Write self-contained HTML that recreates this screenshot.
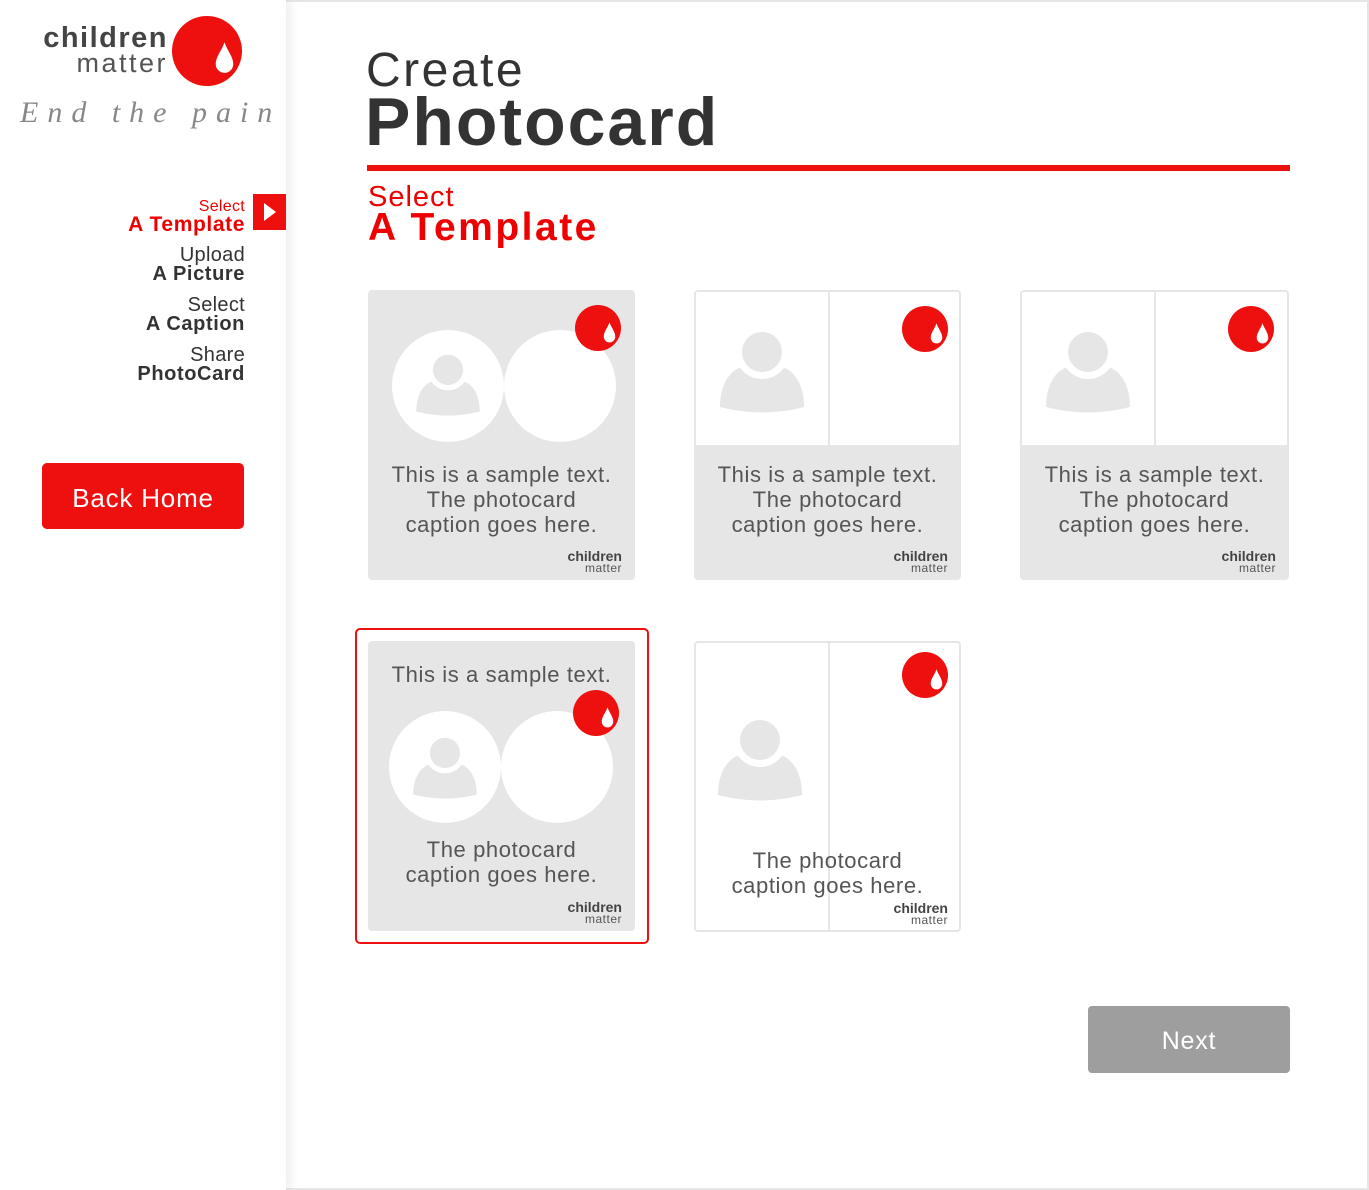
<!DOCTYPE html>
<html><head><meta charset="utf-8"><style>
*{margin:0;padding:0;box-sizing:border-box}
body{width:1369px;height:1190px;background:#fff;font-family:"Liberation Sans",sans-serif;position:relative;overflow:hidden}
.a{position:absolute}
.frame{left:0;top:0;width:1369px;height:1190px;border:2px solid #e6e6e6}
.side{left:0;top:0;width:286px;height:1190px;background:#fff;box-shadow:4px 0 10px rgba(0,0,0,.08)}
.nav{right:1124px;text-align:right;color:#333;line-height:19px}
.nav .l{font-size:20px;letter-spacing:0.3px}
.nav .b{font-size:20px;font-weight:bold;letter-spacing:0.6px}
.card{position:absolute;width:267px;height:290px;border-radius:4px;overflow:hidden}
.cap{position:absolute;left:-10px;width:calc(100% + 20px);text-align:center;font-size:22px;line-height:25px;color:#555;letter-spacing:0.6px}
.lg{position:absolute;right:13px;bottom:6px;text-align:right;color:#444;line-height:11px}
.lg b{font-size:14px;display:block}
.lg span{font-size:12px;color:#555;letter-spacing:0.5px}
</style></head><body>
<div class="a frame"></div>
<div class="a side"></div>

<!-- logo -->
<div class="a" style="left:20px;top:26px;width:148px;text-align:right;color:#444;line-height:25px">
<div style="font-size:29px;font-weight:bold;letter-spacing:1.5px">children</div>
<div style="font-size:27px;color:#555;letter-spacing:2.5px">matter</div></div>
<svg class="a" style="left:172px;top:16px" width="70" height="70" viewBox="0 0 48 48"><circle cx="24" cy="24" r="24" fill="#ee0f0f"/><path d="M36 18 C38 24 42 28 42 33 a6 6 0 0 1 -12 0 c0 -5 4 -9 6 -15z" fill="#fff"/></svg>
<div class="a" style="left:20px;top:96px;font-family:'Liberation Serif',serif;font-style:italic;font-size:30px;color:#888;letter-spacing:9px">End the pain</div>

<!-- nav -->
<div class="a nav" style="top:199px;color:#e00"><div class="l" style="font-size:16px;line-height:16px">Select</div><div class="b" style="font-size:21px">A Template</div></div>
<div class="a" style="left:253px;top:194px;width:33px;height:36px;background:#ee0f0f"></div>
<div class="a" style="left:264px;top:203px;width:0;height:0;border-left:12px solid #fff;border-top:9px solid transparent;border-bottom:9px solid transparent"></div>
<div class="a nav" style="top:246px"><div class="l">Upload</div><div class="b">A Picture</div></div>
<div class="a nav" style="top:296px"><div class="l">Select</div><div class="b">A Caption</div></div>
<div class="a nav" style="top:346px"><div class="l">Share</div><div class="b">PhotoCard</div></div>

<div class="a" style="left:42px;top:463px;width:202px;height:66px;background:#ee0f0f;border-radius:5px;color:#fff;font-size:26px;text-align:center;line-height:70px;letter-spacing:0.8px">Back Home</div>

<!-- header -->
<div class="a" style="left:366px;top:44px;font-size:48px;color:#333;line-height:54px;letter-spacing:2.5px">Create</div>
<div class="a" style="left:365px;top:86px;font-size:68px;font-weight:bold;color:#333;line-height:72px;letter-spacing:2px">Photocard</div>
<div class="a" style="left:367px;top:165px;width:923px;height:6px;background:#ee0f0f"></div>
<div class="a" style="left:368px;top:181px;font-size:29px;color:#e00;line-height:32px;letter-spacing:1px">Select</div>
<div class="a" style="left:368px;top:208px;font-size:39px;font-weight:bold;color:#e00;line-height:40px;letter-spacing:2.5px">A Template</div>

<!-- card1 -->
<div class="card" style="left:368px;top:290px;height:290px;background:#e6e6e6">
<div class="a" style="left:24px;top:40px;width:112px;height:112px;border-radius:50%;background:#fff"></div>
<div class="a" style="left:136px;top:40px;width:112px;height:112px;border-radius:50%;background:#fff"></div>
<div class="cap" style="top:172px">This is a sample text.<br>The photocard<br>caption goes here.</div>
<div class="lg"><b>children</b><span>matter</span></div></div>
<svg class="a" style="left:414px;top:351px" width="68" height="68" viewBox="-45 -25 90 90"><path d="M-42 55 C-42 30 -30 15 -15 14 L15 14 C30 15 42 30 42 55 Q0 66 -42 55Z" fill="#e6e6e6"/><circle r="27" fill="#fff"/><circle r="20" fill="#e6e6e6"/></svg>
<svg class="a" style="left:575px;top:305px" width="46" height="46" viewBox="0 0 48 48"><circle cx="24" cy="24" r="24" fill="#ee0f0f"/><path d="M36 18 C38 24 42 28 42 33 a6 6 0 0 1 -12 0 c0 -5 4 -9 6 -15z" fill="#fff"/></svg>

<!-- card2 & 3 -->
<div class="card" style="left:694px;top:290px;background:#e6e6e6;border:2px solid #e6e6e6">
<div class="a" style="left:0;top:0;width:132px;height:153px;background:#fff"></div>
<div class="a" style="left:134px;top:0;width:131px;height:153px;background:#fff"></div>
<div class="cap" style="top:170px">This is a sample text.<br>The photocard<br>caption goes here.</div>
<div class="lg" style="bottom:4px;right:11px"><b>children</b><span>matter</span></div></div>
<svg class="a" style="left:717px;top:327px" width="90" height="90" viewBox="-45 -25 90 90"><path d="M-42 55 C-42 30 -30 15 -15 14 L15 14 C30 15 42 30 42 55 Q0 66 -42 55Z" fill="#e6e6e6"/><circle r="27" fill="#fff"/><circle r="20" fill="#e6e6e6"/></svg>
<svg class="a" style="left:902px;top:306px" width="46" height="46" viewBox="0 0 48 48"><circle cx="24" cy="24" r="24" fill="#ee0f0f"/><path d="M36 18 C38 24 42 28 42 33 a6 6 0 0 1 -12 0 c0 -5 4 -9 6 -15z" fill="#fff"/></svg>

<div class="card" style="left:1020px;top:290px;width:269px;background:#e6e6e6;border:2px solid #e6e6e6">
<div class="a" style="left:0;top:0;width:132px;height:153px;background:#fff"></div>
<div class="a" style="left:134px;top:0;width:133px;height:153px;background:#fff"></div>
<div class="cap" style="top:170px">This is a sample text.<br>The photocard<br>caption goes here.</div>
<div class="lg" style="bottom:4px;right:11px"><b>children</b><span>matter</span></div></div>
<svg class="a" style="left:1043px;top:327px" width="90" height="90" viewBox="-45 -25 90 90"><path d="M-42 55 C-42 30 -30 15 -15 14 L15 14 C30 15 42 30 42 55 Q0 66 -42 55Z" fill="#e6e6e6"/><circle r="27" fill="#fff"/><circle r="20" fill="#e6e6e6"/></svg>
<svg class="a" style="left:1228px;top:306px" width="46" height="46" viewBox="0 0 48 48"><circle cx="24" cy="24" r="24" fill="#ee0f0f"/><path d="M36 18 C38 24 42 28 42 33 a6 6 0 0 1 -12 0 c0 -5 4 -9 6 -15z" fill="#fff"/></svg>

<!-- card4 selected -->
<div class="a" style="left:355px;top:628px;width:294px;height:316px;border:2px solid #ee0f0f;border-radius:5px"></div>
<div class="card" style="left:368px;top:641px;background:#e6e6e6">
<div class="cap" style="top:21px">This is a sample text.</div>
<div class="a" style="left:21px;top:70px;width:112px;height:112px;border-radius:50%;background:#fff"></div>
<div class="a" style="left:133px;top:70px;width:112px;height:112px;border-radius:50%;background:#fff"></div>
<div class="cap" style="top:196px">The photocard<br>caption goes here.</div>
<div class="lg"><b>children</b><span>matter</span></div></div>
<svg class="a" style="left:411px;top:734px" width="68" height="68" viewBox="-45 -25 90 90"><path d="M-42 55 C-42 30 -30 15 -15 14 L15 14 C30 15 42 30 42 55 Q0 66 -42 55Z" fill="#e6e6e6"/><circle r="27" fill="#fff"/><circle r="20" fill="#e6e6e6"/></svg>
<svg class="a" style="left:573px;top:690px" width="46" height="46" viewBox="0 0 48 48"><circle cx="24" cy="24" r="24" fill="#ee0f0f"/><path d="M36 18 C38 24 42 28 42 33 a6 6 0 0 1 -12 0 c0 -5 4 -9 6 -15z" fill="#fff"/></svg>

<!-- card5 -->
<div class="card" style="left:694px;top:641px;height:291px;background:#fff;border:2px solid #e6e6e6">
<div class="a" style="left:132px;top:0;width:2px;height:100%;background:#e6e6e6"></div>
<div class="cap" style="top:205px">The photocard<br>caption goes here.</div>
<div class="lg" style="bottom:4px;right:11px"><b>children</b><span>matter</span></div></div>
<svg class="a" style="left:715px;top:715px" width="90" height="90" viewBox="-45 -25 90 90"><path d="M-42 55 C-42 30 -30 15 -15 14 L15 14 C30 15 42 30 42 55 Q0 66 -42 55Z" fill="#e6e6e6"/><circle r="27" fill="#fff"/><circle r="20" fill="#e6e6e6"/></svg>
<svg class="a" style="left:902px;top:652px" width="46" height="46" viewBox="0 0 48 48"><circle cx="24" cy="24" r="24" fill="#ee0f0f"/><path d="M36 18 C38 24 42 28 42 33 a6 6 0 0 1 -12 0 c0 -5 4 -9 6 -15z" fill="#fff"/></svg>

<div class="a" style="left:1088px;top:1006px;width:202px;height:67px;background:#9e9e9e;border-radius:4px;color:#fff;font-size:25px;text-align:center;line-height:70px;letter-spacing:0.8px">Next</div>
</body></html>
